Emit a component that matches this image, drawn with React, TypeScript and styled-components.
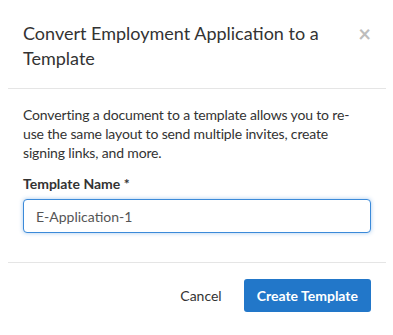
import styled, { createGlobalStyle } from "styled-components";

const GlobalStyle = createGlobalStyle`
  html, body {
    margin: 0;
    padding: 0;
    background: #ffffff;
  }
  body {
    font-family: Lato, "Liberation Sans", sans-serif;
    color: #333333;
  }
`;

const Modal = styled.div`
  width: 393px;
  height: 335px;
  background: #ffffff;
  display: flex;
  flex-direction: column;
`;

const Header = styled.div`
  display: flex;
  align-items: flex-start;
  justify-content: space-between;
  margin: 0 7px 0 8px;
  padding: 21px 0 17px 15px;
  border-bottom: 1px solid #e5e5e5;
`;

const Title = styled.h2`
  margin: 0;
  font-size: 18px;
  font-weight: 400;
  line-height: 25px;
  color: #333333;
  width: 310px;
`;

const Close = styled.button`
  border: none;
  background: none;
  padding: 0;
  margin: 0 15px 0 0;
  font-size: 22px;
  font-weight: 700;
  line-height: 25px;
  font-family: Lato, "Liberation Sans", sans-serif;
  color: #bdbdbd;
  cursor: pointer;
`;

const Body = styled.div`
  margin: 0 7px 0 8px;
  padding: 16px 15px 29px 15px;
  border-bottom: 1px solid #e5e5e5;
`;

const Text = styled.p`
  margin: 0 0 12px;
  width: 330px;
  font-size: 14px;
  line-height: 19px;
  letter-spacing: -0.15px;
  color: #333333;
`;

const Label = styled.label`
  display: block;
  font-size: 14px;
  font-weight: 700;
  line-height: 20px;
  margin-bottom: 5px;
  color: #333333;
`;

const Input = styled.input`
  display: block;
  box-sizing: border-box;
  width: 348px;
  height: 34px;
  padding: 0 12px;
  border: 1px solid #3b8ad9;
  border-radius: 4px;
  box-shadow: 0 0 4px rgba(59, 138, 217, 0.45);
  font-family: Lato, "Liberation Sans", sans-serif;
  font-size: 14px;
  color: #555555;
  outline: none;
`;

const Footer = styled.div`
  display: flex;
  justify-content: flex-end;
  align-items: center;
  gap: 14px;
  padding: 16px 22px 0 0;
`;

const Button = styled.button<{ $primary?: boolean }>`
  font-family: Lato, "Liberation Sans", sans-serif;
  font-size: 14px;
  font-weight: ${(p) => (p.$primary ? 700 : 400)};
  height: 33px;
  padding: 0 ${(p) => (p.$primary ? "13px" : "8px")};
  border: none;
  border-radius: 3px;
  background: ${(p) => (p.$primary ? "#2277c9" : "transparent")};
  color: ${(p) => (p.$primary ? "#ffffff" : "#333333")};
  cursor: pointer;
`;

export default function App() {
  return (
    <>
      <GlobalStyle />
      <Modal>
        <Header>
          <Title>Convert Employment Application to a Template</Title>
          <Close aria-label="Close">×</Close>
        </Header>
        <Body>
          <Text>
            Converting a document to a template allows you to re-use the same
            layout to send multiple invites, create signing links, and more.
          </Text>
          <Label htmlFor="tpl-name">Template Name *</Label>
          <Input id="tpl-name" defaultValue="E-Application-1" />
        </Body>
        <Footer>
          <Button>Cancel</Button>
          <Button $primary>Create Template</Button>
        </Footer>
      </Modal>
    </>
  );
}
